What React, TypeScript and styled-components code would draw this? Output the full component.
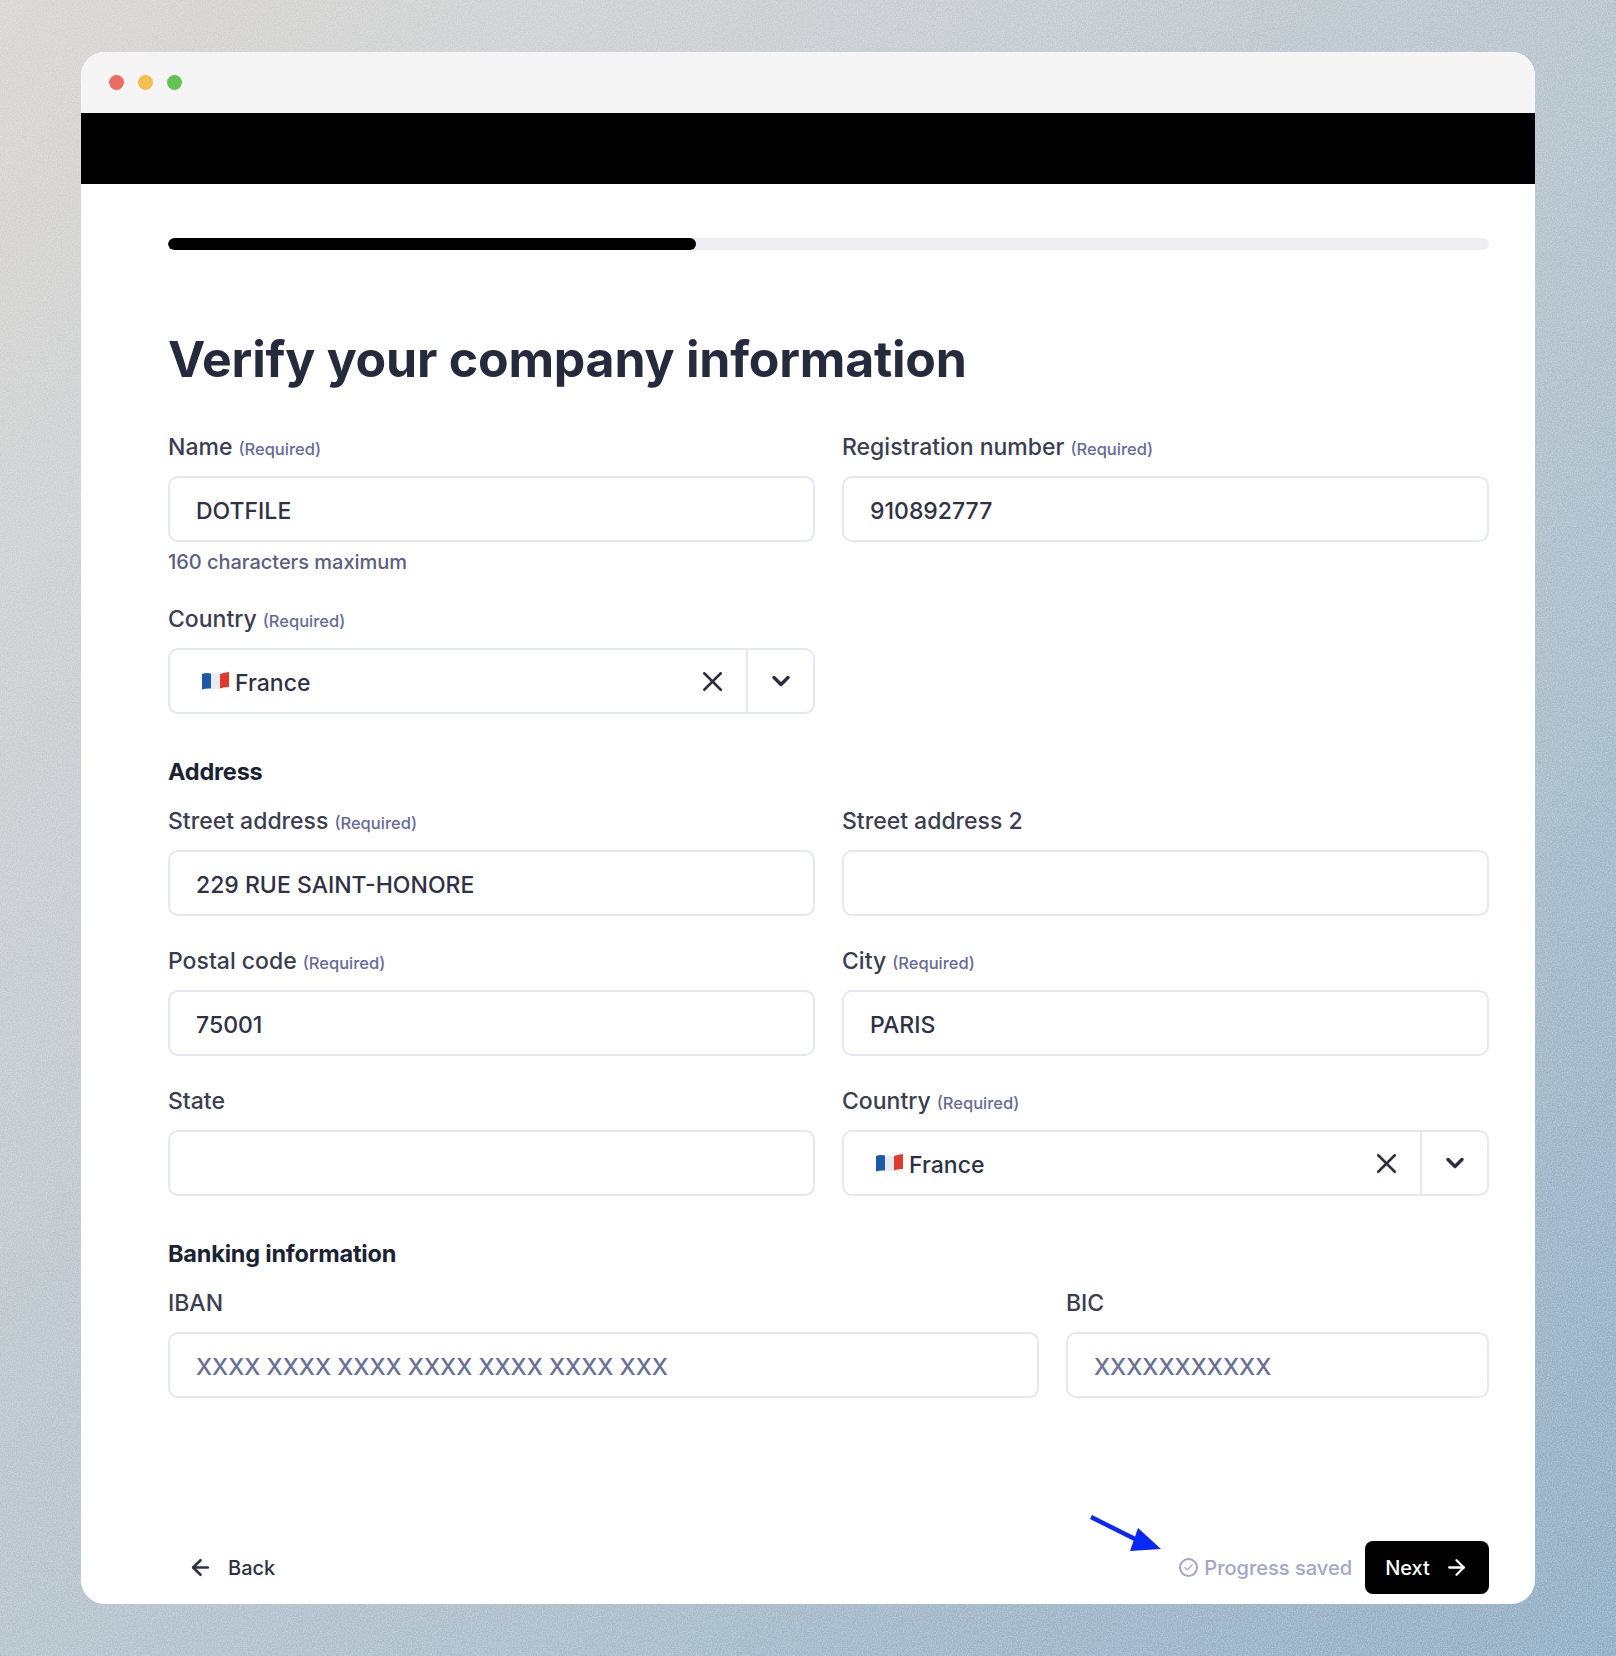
import styled, { createGlobalStyle } from "styled-components";
import { ArrowLeft, ArrowRight, Check, ChevronDown, X } from "lucide-react";

const GlobalStyle = createGlobalStyle`
  html, body {
    margin: 0;
    padding: 0;
  }
  body {
    font-family: Inter, "Liberation Sans", sans-serif;
    -webkit-font-smoothing: antialiased;
  }
  * {
    box-sizing: border-box;
  }
`;

const NOISE =
  "url(\"data:image/svg+xml,%3Csvg xmlns='http://www.w3.org/2000/svg' width='300' height='300'%3E%3Cfilter id='n'%3E%3CfeTurbulence type='fractalNoise' baseFrequency='0.8' numOctaves='2'/%3E%3CfeColorMatrix values='0 0 0 0 1 0 0 0 0 1 0 0 0 0 1 0 0 0 0.5 -0.14'/%3E%3C/filter%3E%3Crect width='300' height='300' filter='url(%23n)'/%3E%3C/svg%3E\")";

const Page = styled.div`
  width: 1616px;
  height: 1656px;
  padding: 52px 81px;
  overflow: hidden;
  background-image: ${NOISE},
    linear-gradient(135deg, #d8d5d2 0%, #c6cbcf 28%, #afbfca 58%, #8dabc3 100%);
`;

const Window = styled.div`
  width: 1454px;
  height: 1552px;
  background: #fff;
  border-radius: 24px;
  overflow: hidden;
  display: flex;
  flex-direction: column;
`;

const TitleBar = styled.div`
  height: 61px;
  background: #f5f5f5;
  display: flex;
  align-items: center;
  gap: 14px;
  padding: 0 28px;
  flex: none;
`;

const Dot = styled.span<{ $color: string }>`
  width: 15px;
  height: 15px;
  border-radius: 50%;
  background: ${(p) => p.$color};
`;

const BlackBar = styled.div`
  height: 71px;
  background: #000;
  flex: none;
`;

const Content = styled.div`
  flex: 1;
  display: flex;
  flex-direction: column;
  padding: 54px 46px 10px 87px;
`;

const Progress = styled.div`
  height: 12px;
  border-radius: 6px;
  background: #eceef3;
  overflow: hidden;
`;

const ProgressFill = styled.div`
  height: 100%;
  border-radius: 6px;
  background: #000;
`;

const Title = styled.h1`
  margin: 81px 0 0;
  height: 58px;
  font-size: 50px;
  line-height: 57px;
  font-weight: 700;
  color: #262a3d;
  letter-spacing: -0.22px;
`;

const Row = styled.div<{ $columns?: string }>`
  display: grid;
  grid-template-columns: ${(p) => p.$columns ?? "1fr 1fr"};
  column-gap: 27px;
  margin-top: 30px;
`;

const FirstRow = styled(Row)`
  margin-top: 43px;
`;

const Field = styled.div`
  min-width: 0;
`;

const Label = styled.div`
  height: 30px;
  line-height: 30px;
  margin-bottom: 14px;
  font-size: 23px;
  font-weight: 500;
  color: #3a3e50;
  white-space: nowrap;
`;

const Required = styled.span`
  margin-left: 6px;
  font-size: 16.5px;
  font-weight: 500;
  color: #676c96;
`;

const InputBox = styled.div<{ $placeholder?: boolean }>`
  height: 66px;
  border: 2px solid #e5e7f1;
  border-radius: 10px;
  padding: 4px 26px 0;
  display: flex;
  align-items: center;
  font-size: 23px;
  font-weight: 500;
  color: ${(p) => (p.$placeholder ? "#6a6f96" : "#2e3243")};
`;

const Hint = styled.div`
  margin-top: 8px;
  height: 24px;
  line-height: 24px;
  font-size: 20px;
  font-weight: 500;
  letter-spacing: -0.03px;
  color: #5b5f80;
`;

const SelectBox = styled.div`
  height: 66px;
  border: 2px solid #e5e7f1;
  border-radius: 10px;
  display: flex;
  align-items: stretch;
  font-size: 23px;
  font-weight: 500;
  color: #2e3243;
`;

const SelectValue = styled.div`
  flex: 1;
  display: flex;
  align-items: center;
  gap: 5px;
  padding: 4px 0 0 31px;
`;

const FlagIcon = styled.svg`
  margin-top: -4px;
`;

const ClearButton = styled.div`
  width: 67px;
  padding-right: 2px;
  display: flex;
  align-items: center;
  justify-content: center;
  color: #2b2e3f;
  border-right: 2px solid #e5e7f1;
`;

const ToggleButton = styled.div`
  width: 65px;
  display: flex;
  align-items: center;
  justify-content: center;
  color: #2b2e3f;
`;

const SectionTitle = styled.div`
  margin-top: 43px;
  height: 30px;
  line-height: 30px;
  font-size: 23.5px;
  font-weight: 700;
  color: #1a2333;
  letter-spacing: -0.2px;
`;

const SectionFields = styled(Row)`
  margin-top: 19px;
`;

const Footer = styled.div`
  margin-top: auto;
  display: flex;
  align-items: center;
  justify-content: space-between;
`;

const BackButton = styled.div`
  display: flex;
  align-items: center;
  gap: 15px;
  padding-left: 20px;
  font-size: 20px;
  font-weight: 500;
  color: #2e3243;
`;

const FooterRight = styled.div`
  position: relative;
  display: flex;
  align-items: center;
  gap: 13px;
`;

const Saved = styled.div`
  display: flex;
  align-items: center;
  gap: 6px;
  font-size: 20px;
  font-weight: 500;
  color: #a2a7c6;
`;

const SavedIcon = styled.span`
  width: 19px;
  height: 19px;
  border: 2px solid #a2a7c6;
  border-radius: 50%;
  display: flex;
  align-items: center;
  justify-content: center;
`;

const NextButton = styled.div`
  width: 124px;
  height: 53px;
  background: #000;
  border-radius: 8px;
  color: #fff;
  display: flex;
  align-items: center;
  justify-content: center;
  gap: 14px;
  font-size: 20px;
  font-weight: 500;
`;

const BlueArrow = styled.svg`
  position: absolute;
  left: -90px;
  top: -26px;
`;

function FranceFlag() {
  return (
    <FlagIcon width="29" height="20" viewBox="0 0 29 20" aria-hidden="true">
      <path d="M1 3 Q5 1.5 10 2.5 V17.5 Q5 17 1 18.5 Z" fill="#1c5aa8" />
      <path d="M10 2.5 Q14 3.5 19 3 V17.5 Q14 18.5 10 17.5 Z" fill="#e8eaef" />
      <path d="M19 3 Q23.5 1.5 28 1 V16 Q23.5 15.5 19 17.5 Z" fill="#e03a2f" />
    </FlagIcon>
  );
}

function LabelText({ text, required }: { text: string; required?: boolean }) {
  return (
    <Label>
      {text}
      {required && <Required>(Required)</Required>}
    </Label>
  );
}

function TextField({
  label,
  value,
  required,
  placeholder,
}: {
  label: string;
  value?: string;
  required?: boolean;
  placeholder?: boolean;
}) {
  return (
    <Field>
      <LabelText text={label} required={required} />
      <InputBox $placeholder={placeholder}>{value}</InputBox>
    </Field>
  );
}

function CountryField() {
  return (
    <Field>
      <LabelText text="Country" required />
      <SelectBox>
        <SelectValue>
          <FranceFlag />
          France
        </SelectValue>
        <ClearButton>
          <X size={33} strokeWidth={1.8} />
        </ClearButton>
        <ToggleButton>
          <ChevronDown size={28} strokeWidth={3} />
        </ToggleButton>
      </SelectBox>
    </Field>
  );
}

export default function App() {
  return (
    <>
      <GlobalStyle />
      <Page>
        <Window>
          <TitleBar>
            <Dot $color="#ec6a5e" />
            <Dot $color="#f4bf4f" />
            <Dot $color="#61c554" />
          </TitleBar>
          <BlackBar />
          <Content>
            <Progress>
              <ProgressFill style={{ width: "40%" }} />
            </Progress>
            <Title>Verify your company information</Title>

            <FirstRow>
              <Field>
                <LabelText text="Name" required />
                <InputBox>DOTFILE</InputBox>
                <Hint>160 characters maximum</Hint>
              </Field>
              <TextField label="Registration number" value="910892777" required />
            </FirstRow>
            <Row>
              <CountryField />
            </Row>

            <SectionTitle>Address</SectionTitle>
            <SectionFields>
              <TextField label="Street address" value="229 RUE SAINT-HONORE" required />
              <TextField label="Street address 2" />
            </SectionFields>
            <Row>
              <TextField label="Postal code" value="75001" required />
              <TextField label="City" value="PARIS" required />
            </Row>
            <Row>
              <TextField label="State" />
              <CountryField />
            </Row>

            <SectionTitle>Banking information</SectionTitle>
            <SectionFields $columns="871px 1fr">
              <TextField label="IBAN" value="XXXX XXXX XXXX XXXX XXXX XXXX XXX" placeholder />
              <TextField label="BIC" value="XXXXXXXXXXX" placeholder />
            </SectionFields>

            <Footer>
              <BackButton>
                <ArrowLeft size={25} strokeWidth={2.5} />
                Back
              </BackButton>
              <FooterRight>
                <BlueArrow width="74" height="38" viewBox="0 0 74 38" aria-hidden="true">
                  <path d="M2 2 L48 25" stroke="#0a28f5" strokeWidth="4.5" fill="none" />
                  <path d="M49 13 L72 34 L41 36 Z" fill="#0a28f5" />
                </BlueArrow>
                <Saved>
                  <SavedIcon>
                    <Check size={11} strokeWidth={2.5} />
                  </SavedIcon>
                  Progress saved
                </Saved>
                <NextButton>
                  Next
                  <ArrowRight size={25} strokeWidth={2.2} />
                </NextButton>
              </FooterRight>
            </Footer>
          </Content>
        </Window>
      </Page>
    </>
  );
}
